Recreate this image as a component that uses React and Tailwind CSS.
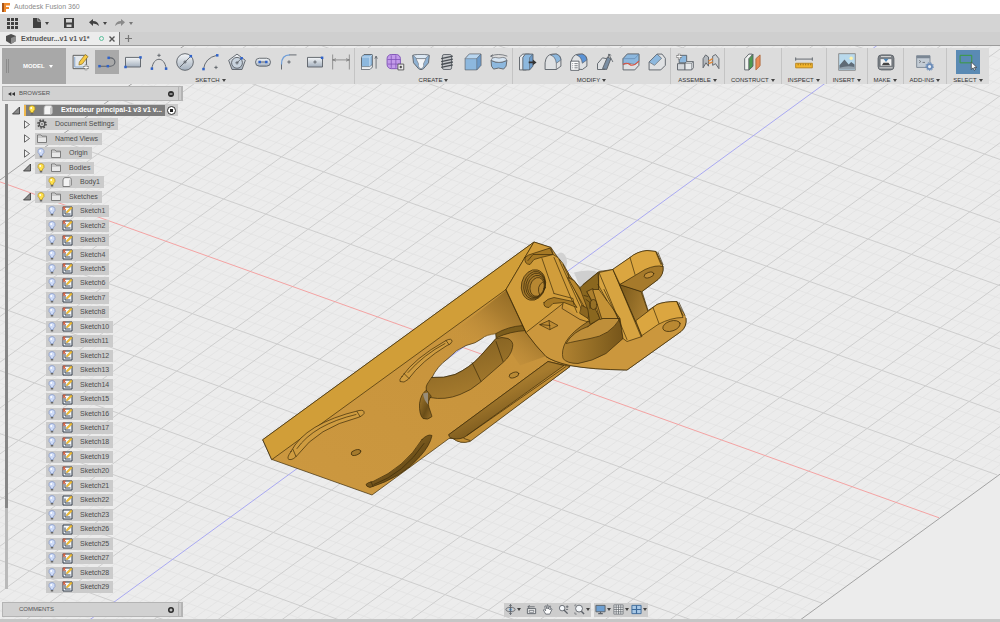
import { useState } from 'react'

const CENTER = { x: 463, y: 347 }

const TREE_SKETCHES = [1, 2, 3, 4, 5, 6, 7, 8, 10, 11, 12, 13, 14, 15, 16, 17, 18, 19, 20, 21, 22, 23, 26, 25, 27, 28, 29]
const PLAIN_SKETCHES = [22, 23, 26]

const BLUE = '#2f62c8'

/* ---------- ground grid ---------- */

function gridLines() {
  const lines = []
  for (let i = -55; i <= 55; i++) {
    const k  = i / 5
    const dx = 42.8 * k + 0.05 * k * k
    const x  = CENTER.x + dx
    const y  = CENTER.y + dx * 0.3577
    const kind = Math.abs(i) === 55 ? 'edge' : i === 0 ? 'blue' : i % 5 === 0 ? 'major' : 'minor'
    lines.push({ id: `a${i}`, kind, x1: x - 1100, y1: y + 1100 * 0.7295, x2: x + 1100, y2: y - 1100 * 0.7295 })
  }
  for (let i = -60; i <= 60; i++) {
    const j  = i / 5
    const dx = 58.1 * j
    const x  = CENTER.x + dx
    const y  = CENTER.y - dx * 0.7295
    const m  = 0.3577 - j * 0.001
    const kind = i === 0 ? 'red' : i % 5 === 0 ? 'major' : 'minor'
    lines.push({ id: `b${i}`, kind, x1: x - 465, y1: y - 465 * m, x2: x + 476, y2: y + 476 * m })
  }
  const rank = ['minor', 'major', 'edge', 'red', 'blue']
  return lines.sort((a, b) => rank.indexOf(a.kind) - rank.indexOf(b.kind))
}

const GRID = gridLines()
const GRID_COLOR = { minor: '#e1e1e1', major: '#cecece', edge: '#a3a3a3', red: '#f4a3a3', blue: '#a9a9f2' }

/* ---------- extruder part ---------- */

function Part() {
  return (
    <g stroke="#3d2c0a" strokeWidth="0.7" strokeLinejoin="round" strokeLinecap="round" fill="none">
      <path d="M574 272 Q590 268 599 272 L580 287 Z" fill="#cfcfcf" stroke="none" />
      <ellipse cx="561" cy="262" rx="6" ry="10" fill="#d2d2d2" stroke="none" />

      {/* base plate with the big opening */}
      <path
        fillRule="evenodd"
        fill="url(#plate)"
        d="M263 439 L534 241.500 L551 247 L580 290 L570 366 L470 440 Q462 444 453 438 L449 438 L372 494.500 L272 459 Z
           M432 377 Q437 366 448 358 Q456 349 466 345 Q476 343 482 338 Q486 334 496 333 L496 338 L480 356 Q470 367 455 374 Q444 378 432 377 Z"
      />
      <path d="M263 439 L534 241.500 L506 289 L272 459 Z" fill="#d19e38" />
      <path d="M506 290 L527 333 L545 356 L520 365 L498 333 L470 340 L440 342 Z" fill="url(#shade)" stroke="none" />
      <path d="M496 333 Q508 326 523 325 L526 330 Q510 331 497 337 Z" fill="#7c5d1c" />

      {/* opening wall */}
      <path
        d="M432 377 Q444 378 455 374 Q470 367 480 356 L496 338 Q502 336 508 338 Q514 341 512.500 347 Q511 355 503 362 L480 382 Q471 390 460 394 Q445 400 430 397 Q424 389 427 384 Z"
        fill="url(#wall)"
      />
      <path d="M472 362 L481 381 M496 341 L503 361" />

      {/* slot next to the opening */}
      <path d="M426 390 Q421 393 419.500 403 Q419 414 423 418 Q428 420 432 416 L429 407 Q427 401 431 396 Z" fill="url(#slot)" />
      <path d="M423 393 L428 392 L428 404 Q424 400 423 393 Z" fill="#988c78" stroke="none" />

      {/* curved slots */}
      <path d="M402 376 Q414 358 446 340 Q452 337 452 341 Q451 344 447 345 Q422 360 408 379 Q404 383 400 381 Q399 379 402 376 Z" fill="#cf9c40" />
      <path d="M404 373 L409 378 M446 340 L449 344 M408 372 Q424 354 445 343" />
      <path d="M291 451 Q305 423 359 410 Q365 409 364 413 Q362 416 358 417 Q318 427 298 454 Q293 460 289 459 Q286 458 291 451 Z" fill="#cf9c40" />
      <path d="M293 449 L296 456 M357 411 L360 416 M297 448 Q314 424 356 414" />
      <path d="M422 439 Q428 433 432 435 Q430 445 420 456 Q402 477 370 487 Q366 486 366 484 Q367 482 373 481 Q405 467 422 439 Z" fill="url(#slot)" />
      <path d="M371 481 L373 486 M374 484 Q404 473 424 443" />
      <ellipse cx="356" cy="452" rx="5" ry="2.600" transform="rotate(-18 356 452)" fill="#a57a2c" />
      <ellipse cx="514" cy="374.500" rx="5" ry="2.600" transform="rotate(-18 514 374.500)" fill="#b98a35" />

      {/* lower rib */}
      <path d="M449 434 L548 361 L570 366 L470 441 Q460 444 453 438 Z" fill="#c28f37" />
      <path d="M449 434 L548 361 L564 365 L464 437 Q456 440 450 437 Z" fill="url(#rib)" />
      <path d="M464 438 L470 440 M467 435 L566 366" />

      {/* front body and socket */}
      <path
        d="M506 289 L534 241.500 L551 247 L553 254 L558 257 L563 263 L568 272 L569 277 L573 279 L580 287 L590 309
           L583 284 L599 271 L613 269 L630 257 Q637 251 647 250 L656 251 L663 266 Q664 273 658 279 L642 291 L648 310
           L657 304 Q664 301 677 301 L686 318 Q687 326 681 331 L627 369.500 Q592 369 570 365 Q553 361 546 356 Q536 345 526 332 Z"
        fill="#d19d3b"
      />
      <path d="M570 365 Q553 361 546 356 Q536 345 526 332 L563 303 L588 323 L623 338 L640 336 L683 311 Q690 322 681 331 L627 369.500 Q592 369 570 365 Z" fill="#cb973d" stroke="none" />
      <path d="M526 332 L563 303 M506 289 L526 332 Q536 346 546 356 Q553 361 570 365 Q592 369 627 369.500 L681 331 Q687 326 686 318" />

      {/* notches of the block */}
      <path d="M525 257 Q528 254 533 253 L550 247.500 L553 254 L541 257 L534 259 L530 264 Q524 264 525 257 Z" fill="#a67925" />
      <path d="M528 260 L533 254 L552 254" />
      <path d="M542 258 L554 293 M554 257 L577 312 M559 259 L582 310 M563 264 L590 322" />
      <path d="M544 302 Q547 298 554 297 L573 301 L577 307 L564 302 L553 303 L549 307 Q543 307 544 302 Z" fill="#a67925" />
      <path d="M554 293 L573 298 L574 304 M563 303 L562 308 L580 319 L590 322 L588 327" />
      <path d="M568 277 L574 280 L594 308 L588 313 L571 283 Z" fill="#b9882f" />
      <path d="M582 305 L590 309 L588 318 L580 313 Z" fill="#8a6520" />
      <path d="M540 324 L549 320 L558 325 L550 329 Z M549 320 L550 329 M540 324 L550 325" fill="#bd8b34" />

      {/* threaded hole */}
      <g transform="rotate(14 533.500 284.500)">
        <ellipse cx="533.500" cy="284.500" rx="12" ry="15.500" fill="#a3782a" />
        <ellipse cx="534.500" cy="284.500" rx="10.500" ry="14" />
        <ellipse cx="535.500" cy="284.500" rx="9.500" ry="12.500" />
        <ellipse cx="536.500" cy="285" rx="8.500" ry="11" />
        <ellipse cx="537.500" cy="285.500" rx="7" ry="9.500" fill="#b78732" />
        <path d="M542 279 Q536 285 542 293" />
      </g>

      {/* socket crescent */}
      <path d="M588 321 Q572 331 566 341 Q561 350 563 358 Q567 363 578 363 Q592 361 606 353 L623 338 L620 318 L601 318 Q596 325 588 321 Z" fill="url(#socket)" />
      <path d="M588 326 Q600 318 601 318 L620 318 Q610 335 590 338 Q574 341 566 343 Q573 331 588 326 Z" fill="#bf8f3a" />

      {/* dark gap between block and clamp */}
      <path d="M580 287 L598 272 L599 289 L587 291 L594 306 L600 318 L590 324 L588 310 Z" fill="#8a671f" />
      <path d="M587 291 L593 288 L606 317 L600 319 L597 309 Z" fill="#ac7f2d" />
      <ellipse cx="593.500" cy="304" rx="3.500" ry="5" fill="#967026" />
      <path d="M586 299 L590 302 L590 308 M584 295 L588 296" />

      {/* clamp */}
      <path d="M593 289 L604 289 L620 318 L602 318 Z" fill="#c59337" />
      <path d="M599 272 L613 269 L642 336 L627 341 L623 338 L620 318 L599 289 Z" fill="#d7a441" />
      <path d="M599 272 L627 339 M598 284 L607 300 M604 289 L618 318 M613 269 L641 336" />
      <path d="M620 284 L641 291 L648 311 L636 321 Z" fill="url(#gap)" />
      <path d="M630 257 Q637 251 647 250 L656 251 L663 266 Q655 265 645 271 L620 284 L613 269 Z" fill="#dba640" />
      <path d="M620 284 L645 269 Q656 264 663 266 Q664 274 658 279 L642 291 Z" fill="#a67a2b" />
      <path d="M630 257 L635 274 M656 252 L661 264 M658 252 L663 264" />
      <ellipse cx="649" cy="274.500" rx="5" ry="2.600" transform="rotate(-18 649 274.500)" fill="#c18e38" />
      <path d="M636 320 L657 304 Q664 301 677 301 L683 317 Q671 317 658 324 L642 335 Z" fill="#dba640" />
      <path d="M653 307 L659 323 M677 302 L683 315 M679 302 L685 315" />
      <ellipse cx="671.500" cy="325.500" rx="9" ry="5" transform="rotate(-18 671.500 325.500)" fill="#b98832" />
    </g>
  )
}

function Viewport() {
  return (
    <svg viewBox="0 45 1000 574" preserveAspectRatio="xMidYMid slice" className="absolute inset-0 h-full w-full" aria-hidden="true">
      <defs>
        <linearGradient id="plate" x1="0" y1="1" x2="1" y2="0">
          <stop offset="0" stopColor="#cc9840" />
          <stop offset="1" stopColor="#c6923a" />
        </linearGradient>
        <linearGradient id="shade" x1="1" y1="0" x2="0.2" y2="0.7">
          <stop offset="0" stopColor="#7f5c1c" />
          <stop offset="0.5" stopColor="#aa7d30" />
          <stop offset="1" stopColor="#c99540" stopOpacity="0" />
        </linearGradient>
        <linearGradient id="wall" x1="0" y1="0" x2="0.4" y2="1">
          <stop offset="0" stopColor="#7d5c1f" />
          <stop offset="1" stopColor="#a67b2e" />
        </linearGradient>
        <linearGradient id="slot" x1="0" y1="0" x2="1" y2="1">
          <stop offset="0" stopColor="#a97e30" />
          <stop offset="0.6" stopColor="#6b4e18" />
          <stop offset="1" stopColor="#9a712a" />
        </linearGradient>
        <linearGradient id="rib" x1="0.4" y1="0.4" x2="0.6" y2="0.7">
          <stop offset="0" stopColor="#a67b2e" />
          <stop offset="1" stopColor="#7d5b1e" />
        </linearGradient>
        <linearGradient id="socket" x1="0" y1="0.5" x2="1" y2="0.5">
          <stop offset="0" stopColor="#b08231" />
          <stop offset="0.6" stopColor="#8d6823" />
          <stop offset="1" stopColor="#76551a" />
        </linearGradient>
        <linearGradient id="gap" x1="0" y1="0" x2="1" y2="0.4">
          <stop offset="0" stopColor="#7a591b" />
          <stop offset="1" stopColor="#a67c30" />
        </linearGradient>
      </defs>
      {GRID.map(l => (
        <line key={l.id} x1={l.x1} y1={l.y1} x2={l.x2} y2={l.y2} stroke={GRID_COLOR[l.kind]} strokeWidth={l.kind === 'minor' ? 0.7 : 1} />
      ))}
      <Part />
    </svg>
  )
}

/* ---------- toolbar icons ---------- */

function Icon({ children, className = 'h-6 w-6' }) {
  return (
    <svg viewBox="0 0 24 24" className={className} fill="none" stroke="#5c6168" strokeWidth="1.1" strokeLinejoin="round" aria-hidden="true">
      {children}
    </svg>
  )
}

const Dot = ({ x, y }) => <rect x={x - 1.5} y={y - 1.5} width="3" height="3" fill={BLUE} stroke="none" />
const Plus = ({ x, y }) => <path d={`M${x - 2} ${y}h4M${x} ${y - 2}v4`} />

const STEEL = 'url(#steel)'
const SKY   = '#8db8de'

const SKETCH_TOOLS = [
  { name: 'Create Sketch', art: <><rect x="2.500" y="4" width="16" height="16" fill="#e3e7eb" stroke="#555" /><path d="M4.500 6v12h12" stroke="#8aa9cc" strokeWidth="1.200" /><path d="M10 12l7-9 3.500 2.500-7 9-4 1z" fill="#f6c945" stroke="#8a6d1c" strokeWidth="0.800" /><path d="M18 15v7M14.500 18.500h7" stroke="#777" strokeWidth="3" /><path d="M18 15.500v6M15 18.500h6" stroke="#fff" strokeWidth="1.200" /></> },
  { name: 'Line', active: true, art: <><path d="M3 17h13a5.500 5 0 0 0 0-10h-2" strokeWidth="1.300" /><Dot x={3} y={17} /><Dot x={13} y={17} /><Dot x={14} y={7} /></> },
  { name: 'Rectangle', art: <><rect x="3" y="6.500" width="18" height="11.500" fill={STEEL} /><Dot x={21} y={6.5} /><Dot x={3} y={18} /></> },
  { name: 'Arc', art: <><path d="M3.500 20C5 5 19 5 20.500 20" /><Plus x={12} y={4} /><Dot x={3.5} y={20} /><Dot x={20.5} y={20} /></> },
  { name: 'Circle', art: <><circle cx="12" cy="12" r="10" fill={STEEL} /><path d="M6 18L18.500 5.500" /><path d="M10 12h4M12 10v4" /><Dot x={19} y={5} /></> },
  { name: 'Three Point Arc', art: <><path d="M3 20.500Q5 7 19 4" /><Plus x={18} y={18.5} /><Dot x={3} y={20.5} /><Dot x={19.5} y={4} /></> },
  { name: 'Polygon', art: <><path d="M12 2.500l10 7.500-4 11H6L2 10z" fill={STEEL} /><circle cx="12" cy="13" r="6.500" fill="#c8d3de" /><path d="M12 13l5-5M10 13h4M12 11v4" /><Dot x={17.5} y={7.5} /></> },
  { name: 'Slot', art: <><rect x="3" y="7.500" width="18" height="9.500" rx="4.700" fill={STEEL} /><path d="M8 12h8" /><Dot x={8} y={12} /><Dot x={16} y={12} /></> },
  { name: 'Fillet', art: <><path d="M3 21v-7M12 3.500h9" /><path d="M3 15Q3 3.500 13 3.500" stroke="#6f9ed8" strokeWidth="1.500" /><Plus x={12} y={12} /></> },
  { name: 'Center Rectangle', art: <><rect x="3" y="6.500" width="18" height="11.500" fill={STEEL} /><Plus x={12} y={12} /><Dot x={20.5} y={7} /></> },
  { name: 'Dimension', art: <path d="M2 3v18M22 3v18M2 9.500h20M6 8L2 9.500 6 11M18 8l4 1.500-4 1.500" strokeWidth="0.900" stroke="#777" /> },
]

const CREATE_TOOLS = [
  { name: 'Extrude', art: <><path d="M3 6l3-3h10v15l-3 3H3z" fill={SKY} /><path d="M3 6h10l3-3M13 6v15" stroke="#c9e0f4" /><path d="M3 17.500V21h10l3-3v-3l-3 2.500z" fill="#eef0f2" strokeWidth="0.700" /><path d="M20.500 20V5M19 8l1.500-3L22 8" strokeWidth="1" /></> },
  { name: 'Create Form', art: <><rect x="2.500" y="3" width="16" height="17" rx="5" fill="#c39bea" stroke="#7d51b5" /><path d="M7.500 4v15M13 4v15M3 9h15M3 14.500h15" stroke="#7d51b5" strokeWidth="0.900" /><rect x="15.500" y="14.500" width="7" height="7" fill="#eee" stroke="#555" /><path d="M17.500 18h3M19 16.500v3" stroke="#222" /></> },
  { name: 'Loft', art: <><path d="M2 4l6-1h8l6 1-1 9-6 7q-3 2.500-6 0l-6-7z" fill="#8fb2d3" /><path d="M2.500 4L8 3h8l5.500 1L17 8H7z" fill="#dce8f3" strokeWidth="0.600" /><path d="M6 8h12l-3 6q1 5-3 6-4-1-3-6z" fill="#f2f5f8" strokeWidth="0.600" /></> },
  { name: 'Thread', art: <><rect x="6.500" y="3" width="11" height="18" rx="2" fill="#c7c9cc" /><path d="M5 8l14-3M5 11.500l14-3M5 15l14-3M5 18.500l14-3" strokeWidth="1.700" stroke="#4a4f55" /></> },
  { name: 'Box', art: <><path d="M2.500 8l5-5.500h14V16l-5 5.500h-14z" fill={SKY} strokeWidth="0.800" /><path d="M2.500 8h14l5-5.500h-14z" fill="#b9d6ef" strokeWidth="0.600" /><path d="M16.500 8v13.500l5-5.500V2.500z" fill="#6c9bca" strokeWidth="0.600" /></> },
  { name: 'Revolve', art: <><path d="M2.500 10q9.500 5 19 0l-1 7-3 3.500q-6-2.500-12 0L3 17z" fill={SKY} /><path d="M2.500 10q1-4 5-3.500 4.500 1.500 9 0 4-.5 5 3.500-9.500 5-19 0z" fill="#d5e4f2" strokeWidth="0.800" /><path d="M2 5q9-4 20 0M2 5l2.500-2M2 5l3 1.500" strokeWidth="0.900" /></> },
]

const MODIFY_TOOLS = [
  { name: 'Press Pull', art: <><path d="M3 6l4-3.500h8V18l-4 3.500H3z" fill="#e7e9eb" /><path d="M7 6.500l3-4h9V17l-4 4.500H7z" fill={SKY} /><path d="M15 7v14.500l4-4.500V2.500z" fill="#6c9bca" strokeWidth="0.700" /><path d="M14 11.500h5V9l4.500 3.500-4.500 3.500v-2.500h-5z" fill="#333" stroke="none" /></> },
  { name: 'Fillet Edge', art: <><path d="M2.500 21v-8q1-10 9-10.500h5q5 2 5 7V17l-5.500 4z" fill="#dfe1e3" /><path d="M9 3.500q6 2 7 10l5.500-4q-1-6-6-7z" fill={SKY} strokeWidth="0.800" /><path d="M16 21v-7.500" strokeWidth="0.800" /></> },
  { name: 'Change Parameters', art: <><path d="M2.500 20v-7q1-10 9-10.500h5q5 2 5 7V17l-5.500 4z" fill="#dfe1e3" /><path d="M9 3.500q6 2 7 10l5.500-4q-1-6-6-7z" fill="#5b93d6" strokeWidth="0.800" /><rect x="2" y="11" width="10" height="11" fill="#fff" /><path d="M4 14h1M6.500 14h4M4 16.500h1M6.500 16.500h4M4 19h1M6.500 19h4" strokeWidth="1" /></> },
  { name: 'Draft', art: <><path d="M3 21v-7l6-7 5 1-2 13z" fill="#dfe1e3" /><path d="M9 20l6-14 4 2-5 13z" fill="#7a8ea3" /><path d="M21.500 12L16.500 2.500M16 6l.5-3.500 3 1.500" strokeWidth="1" /></> },
  { name: 'Split Body', art: <><path d="M2.500 8l5-5.500h14V16l-5 5.500h-14z" fill="#dfe1e3" /><path d="M2.500 8l5-5.500h14V11l-5 4q-7-3-14 0z" fill={SKY} strokeWidth="0.800" /><path d="M2.500 8h14l5-5.500" stroke="#5c80a5" strokeWidth="0.700" /><path d="M2.500 15q4-3 8 0t11-4" stroke="#dc5140" strokeWidth="1.400" /></> },
  { name: 'Chamfer', art: <><path d="M2.500 12L12 2.500h6l4 5V16l-5.500 5.500h-14z" fill="#dfe1e3" /><path d="M2.500 12L12 2.500l5.500 5L9 16z" fill={SKY} strokeWidth="0.800" /></> },
]

const ASSEMBLE_TOOLS = [
  { name: 'New Component', art: <><path d="M5 6l2-2h7v9H5z" fill={SKY} /><path d="M3 14h9v7.500H3z" fill="#d4d8dc" /><path d="M12 13.500l2-2h8V19l-2 2.500h-8z" fill="#e7eaec" /><path d="M20 13.500v8M12 13.500h8l2-2" strokeWidth="0.700" /><path d="M5 2v7M1.500 5.500h7" stroke="#777" strokeWidth="3" /><path d="M5 2.500v6M2 5.500h6" stroke="#fff" strokeWidth="1.200" /></> },
  { name: 'Joint', art: <><path d="M2.500 19V8l3-4.500L9 6v11l-3-4z" fill="#b4b9be" /><path d="M14 16V5l3.500-2 4 5v12l-4-6z" fill="#cdd1d4" /><path d="M9 11l5-3M9 14l5-2" stroke="#e08a3c" strokeWidth="1.800" /></> },
]

const CONSTRUCT_TOOLS = [{ name: 'Offset Plane', art: <><path d="M2 8l5-5.500h4V18l-4 3.500H2z" fill="#f0f2f0" /><path d="M7 8l5-5.500V17l-5 4.500z" fill="#4c9a51" /><path d="M15.500 8l5-4.500v13l-5 5z" fill="#e88b54" stroke="#b06a40" /></> }]
const INSPECT_TOOLS   = [{ name: 'Measure', art: <><path d="M2 8.500h20M2 6.500v4M22 6.500v4" /><rect x="2" y="13.500" width="20" height="5.500" fill="#f3b52c" stroke="#b8861f" /><path d="M5 14v2M8 14v2M11 14v2M14 14v2M17 14v2M20 14v2" stroke="#7b570d" strokeWidth="0.800" /></> }]
const INSERT_TOOLS    = [{ name: 'Insert Image', art: <><rect x="2" y="2" width="20" height="20" fill="#b9d9ec" stroke="#8a8a8a" /><circle cx="17" cy="7.500" r="2" fill="#fff3a8" stroke="none" /><path d="M3 19v-3l6-7 5 6 3-3 4 3v5H3z" fill="#5f6b76" stroke="none" /><path d="M3 21v-2q9-3 18-1v3z" fill="#94a2ad" stroke="none" /></> }]
const MAKE_TOOLS      = [{ name: '3D Print', art: <><rect x="2.500" y="3.500" width="19" height="18" rx="4" fill="#7c8186" /><rect x="5" y="8" width="14" height="9" fill="#f2f2f2" strokeWidth="0.800" /><path d="M9 8h6l-3 4z" fill="#4b83b5" stroke="none" /><path d="M7 16l2-3h6l2 3z" fill="#444" stroke="none" /><path d="M4 19h16M6 5.500h12" stroke="#ddd" /></> }]
const ADDIN_TOOLS     = [{ name: 'Scripts and Add-Ins', art: <><rect x="2" y="4.500" width="16" height="14" fill="#c3ccd5" stroke="#7b8794" /><path d="M2 6h16" strokeWidth="3" stroke="#7b8794" /><path d="M5 10l2 1.500L5 13M9 12.500h3" strokeWidth="0.900" /><circle cx="17.500" cy="17.500" r="3" stroke="#6b8cb8" strokeWidth="2.200" fill="#e7ecf3" /><circle cx="17.500" cy="17.500" r="4.700" stroke="#6b8cb8" strokeWidth="1.200" strokeDasharray="1.600 1.600" /></> }]
const SELECT_TOOLS    = [{ name: 'Select', blue: true, art: <><rect x="2.500" y="4" width="14" height="9" stroke="#3c9a3f" strokeWidth="1.200" /><path d="M16 12v9l2-2 1.500 3 1.500-1-1.500-2.500h3z" fill="#fff" stroke="#333" strokeWidth="0.800" /></> }]

const GROUPS = [
  { label: 'SKETCH',    tools: SKETCH_TOOLS },
  { label: 'CREATE',    tools: CREATE_TOOLS },
  { label: 'MODIFY',    tools: MODIFY_TOOLS },
  { label: 'ASSEMBLE',  tools: ASSEMBLE_TOOLS },
  { label: 'CONSTRUCT', tools: CONSTRUCT_TOOLS },
  { label: 'INSPECT',   tools: INSPECT_TOOLS },
  { label: 'INSERT',    tools: INSERT_TOOLS },
  { label: 'MAKE',      tools: MAKE_TOOLS },
  { label: 'ADD-INS',   tools: ADDIN_TOOLS },
  { label: 'SELECT',    tools: SELECT_TOOLS },
]

function Caret({ className = 'text-[#444]' }) {
  return (
    <svg viewBox="0 0 4 3" className={`h-[3px] w-1 shrink-0 ${className}`} aria-hidden="true">
      <path d="M0 0h4L2 3z" fill="currentColor" />
    </svg>
  )
}

function ToolGroup({ group, first }) {
  return (
    <div className={`flex flex-col items-center justify-between pt-0.5 ${first ? 'pl-px' : 'border-l border-[#c4c4c4]'}`}>
      <div className="flex pl-px">
        {group.tools.map(tool => (
          <button
            key={tool.name}
            aria-label={tool.name}
            className={`mx-px flex h-6 w-6 items-center justify-center ${tool.active ? 'bg-[#a9a9a9]' : ''} ${tool.blue ? 'bg-[#5a8ab4]' : ''}`}
          >
            <Icon className="h-5 w-5">{tool.art}</Icon>
          </button>
        ))}
      </div>
      <button className="flex items-center gap-0.5 px-1.5 text-[6px] leading-[8px] text-[#333]">
        {group.label}
        <Caret />
      </button>
    </div>
  )
}

/* ---------- browser tree ---------- */

function Bulb({ on }) {
  return (
    <svg viewBox="0 0 8 10" className="h-[10px] w-2 shrink-0" aria-hidden="true">
      <path d="M4 .5a3 3 0 0 0-1.700 5.500l.4 1.500h2.600l.4-1.500A3 3 0 0 0 4 .5z" fill={on ? '#ffe14d' : '#cfdcf8'} stroke={on ? '#b08f1c' : '#7f93c4'} strokeWidth="0.700" />
      <path d="M2.800 8h2.400v1.500H2.800z" fill="#666" />
      <circle cx="3.200" cy="3" r="0.900" fill="#fff" />
    </svg>
  )
}

function Folder() {
  return (
    <svg viewBox="0 0 10 9" className="h-[9px] w-[10px] shrink-0" aria-hidden="true">
      <path d="M.5 8.500V1h3.500l1 1.200h4.500v6.300z" fill="#e8e8e8" stroke="#666" strokeWidth="0.800" />
      <path d="M.5 3h9" stroke="#888" strokeWidth="0.600" />
    </svg>
  )
}

function Gear() {
  return (
    <svg viewBox="0 0 10 10" className="h-[10px] w-[10px] shrink-0" fill="none" stroke="#4d4d4d" aria-hidden="true">
      <circle cx="5" cy="5" r="4" strokeWidth="1.600" strokeDasharray="1.600 1.540" />
      <circle cx="5" cy="5" r="2.800" strokeWidth="1.200" />
      <circle cx="5" cy="5" r="0.800" fill="#4d4d4d" stroke="none" />
    </svg>
  )
}

function BodyIcon({ className }) {
  return (
    <svg viewBox="0 0 10 10" className={`h-[10px] w-[10px] shrink-0 ${className}`} aria-hidden="true">
      <path d="M1 3q0-2 2-2.400h4.500Q9.300.8 9.300 2.500V8L8 9.500H1z" fill="#f4f4f4" stroke="currentColor" strokeWidth="0.800" />
      <path d="M7 3v6.400L9 8V1.500z" fill="#c9c9c9" />
    </svg>
  )
}

function SketchIcon({ plain }) {
  return (
    <svg viewBox="0 0 11 11" className="h-[11px] w-[11px] shrink-0" aria-hidden="true">
      <path d="M1 1h9v9H1z" fill="#f4f8fc" stroke="#333d4a" strokeWidth="1" />
      <path d="M3 3.500V8h5.500" stroke="#3a4657" fill="none" />
      <path d="M4.200 7l.6-1.800L9 .8l1.400 1.300L6 6.500z" fill="#f5bf2e" stroke="#a87c18" strokeWidth="0.300" />
      {!plain && <path d="M.6.800l3.300 3M3.900.8l-3.300 3M2.200.2v4" stroke="#e2562f" strokeWidth="0.800" />}
    </svg>
  )
}

function Twisty({ open }) {
  return (
    <svg viewBox="0 0 8 9" className="h-[9px] w-2 shrink-0" aria-hidden="true">
      {open
        ? <path d="M7.500 1v7H.5z" fill="#8a8a8a" stroke="#333" strokeWidth="0.800" />
        : <path d="M1.500.800l5 3.700-5 3.700z" fill="#f0f0f0" stroke="#444" strokeWidth="0.800" />}
    </svg>
  )
}

function Row({ open, nested, icon, bulb, children }) {
  return (
    <li className={`flex h-3 items-center ${nested ? 'pl-[34px]' : 'pl-[11px]'}`}>
      {open !== undefined && <button aria-label="Toggle" className="mr-1 flex"><Twisty open={open} /></button>}
      <button className="flex h-3 items-center bg-[#cbcbcb] pr-1 pl-0.5 text-[#4c4c4c]">
        {bulb !== undefined && <span className="mr-1.5 flex"><Bulb on={bulb} /></span>}
        <span className="flex w-[18px]">{icon}</span>
        {children}
      </button>
    </li>
  )
}

function Tree() {
  return (
    <ul className="flex flex-1 flex-col justify-between text-[7px] leading-3 whitespace-nowrap">
      <li className="flex h-3 items-center">
        <button aria-label="Toggle" className="mr-1 flex"><Twisty open /></button>
        <span className="flex h-3 items-center bg-[#cbcbcb]">
          <button className="flex h-[11px] w-[141px] items-center border-l-2 border-[#f0b84c] bg-[#7d7d7d] font-bold text-white">
            <span className="ml-0.5 flex"><Bulb on /></span>
            <span className="mr-2 ml-[7px] flex"><BodyIcon className="text-[#aaaaaa]" /></span>
            Extrudeur principal-1 v3 v1 v...
          </button>
          <label className="flex px-0.5">
            <input type="radio" name="active" defaultChecked aria-label="Activate component" className="h-[9px] w-[9px] appearance-none rounded-full border border-[#333] bg-white bg-[radial-gradient(circle,#222_30%,transparent_35%)]" />
          </label>
        </span>
      </li>
      <Row open={false} icon={<Gear />}>Document Settings</Row>
      <Row open={false} icon={<Folder />}>Named Views</Row>
      <Row open={false} bulb={false} icon={<Folder />}>Origin</Row>
      <Row open bulb icon={<Folder />}>Bodies</Row>
      <Row nested bulb icon={<BodyIcon className="text-[#666666]" />}>Body1</Row>
      <Row open bulb icon={<Folder />}>Sketches</Row>
      {TREE_SKETCHES.map(n => (
        <Row key={n} nested bulb={false} icon={<SketchIcon plain={PLAIN_SKETCHES.includes(n)} />}>
          Sketch{n}
        </Row>
      ))}
    </ul>
  )
}

function PanelHeader({ title, arrows, plus, open, onToggle }) {
  return (
    <div className="flex h-[15px] w-[181px] shrink-0 items-center border border-[#b4b4b4] bg-[#d1d1d1] text-[6px] text-[#555]">
      <span className="flex w-4 justify-center">
        {arrows && (
          <svg viewBox="0 0 7 4" className="h-1 w-[7px]" aria-hidden="true"><path d="M3.300 0v4L0 2zM7 0v4L3.700 2z" fill="#333" /></svg>
        )}
      </span>
      <h2 className="flex-1">{title}</h2>
      <button aria-label={title} aria-expanded={open} onClick={onToggle} className="mr-1 flex">
        <svg viewBox="0 0 6 6" className="h-1.5 w-1.5" aria-hidden="true">
          <circle cx="3" cy="3" r="3" fill="#2b2b2b" />
          <path d={plus ? 'M1.500 3h3M3 1.500v3' : 'M1.500 3h3'} stroke="#fff" strokeWidth="0.900" />
        </svg>
      </button>
      <span className="h-full w-1 border-x border-[#b4b4b4] bg-[#cccccc]" />
    </div>
  )
}

/* ---------- view navigation ---------- */

const NAV_LEFT = [
  { name: 'Orbit', caret: true, art: <><circle cx="12" cy="12" r="3" fill="#5d9bd0" stroke="none" /><ellipse cx="12" cy="12" rx="10" ry="4.500" strokeWidth="1.800" /><path d="M12 1v22M9 5l3-4 3 4M9 19l3 4 3-4" strokeWidth="1.800" /></> },
  { name: 'Look At', art: <><path d="M3 10h18v11H3z" fill="#eee" strokeWidth="2" /><path d="M7 14h10v4H7z" fill="#fff" strokeWidth="1.600" /><path d="M4 6h15M8 3L4 6l4 3" strokeWidth="1.800" /></> },
  { name: 'Pan', art: <path d="M8 22L3 13l2-1 3 3L6 5l2-1 3 7V2h2l1 9 3-7 2 1-2 8 3-3 2 1-5 11z" fill="#fff" strokeWidth="1.700" /> },
  { name: 'Zoom', art: <><circle cx="9" cy="9" r="6" fill="#f4f7fa" strokeWidth="1.900" /><path d="M13 13l8 8" strokeWidth="3" /><path d="M17 6h6M20 3v6M17 12h5" strokeWidth="1.700" /></> },
  { name: 'Fit', caret: true, art: <><circle cx="11" cy="10" r="7.500" fill="#f4f7fa" strokeWidth="1.900" /><path d="M16 16l6 6" strokeWidth="3" /><path d="M2 18v4h4M2 5V2h3" strokeWidth="1.400" /></> },
]
const NAV_RIGHT = [
  { name: 'Display Settings', caret: true, art: <><rect x="2" y="3" width="20" height="14" fill="#6e9fd0" strokeWidth="2" /><path d="M7 21h10M12 17v4" strokeWidth="2.500" /></> },
  { name: 'Grid and Snaps', caret: true, art: <><rect x="2" y="2" width="20" height="20" fill="#f6f6f6" strokeWidth="1.500" /><path d="M7 2v20M12 2v20M17 2v20M2 7h20M2 12h20M2 17h20" strokeWidth="1.500" /></> },
  { name: 'Viewports', caret: true, art: <><rect x="2" y="3" width="20" height="18" fill="#a8c8e6" stroke="#3c6a9a" strokeWidth="2" /><path d="M12 3v18M2 12h20" stroke="#3c6a9a" strokeWidth="2.500" /></> },
]

function NavGroup({ items, className }) {
  return (
    <div className={`flex h-[14px] items-center bg-[#cdcdcd] px-px ${className}`}>
      {items.map(item => (
        <button key={item.name} aria-label={item.name} className="flex items-center gap-px">
          <Icon className="h-[11px] w-[11px]">{item.art}</Icon>
          {item.caret && <Caret />}
        </button>
      ))}
    </div>
  )
}

/* ---------- application bars ---------- */

function QuickBar() {
  return (
    <div className="flex h-[18px] shrink-0 items-center bg-[#d4d4d4] pl-[7px] text-[#404040]">
      <button aria-label="Data panel" className="mr-[15px] flex">
        <svg viewBox="0 0 11 11" className="h-[11px] w-[11px]" aria-hidden="true">
          <path d="M0 0h3v3H0zM4 0h3v3H4zM8 0h3v3H8zM0 4h3v3H0zM4 4h3v3H4zM8 4h3v3H8zM0 8h3v3H0zM4 8h3v3H4zM8 8h3v3H8z" fill="currentColor" />
        </svg>
      </button>
      <button aria-label="File" className="mr-[15px] flex items-center gap-1">
        <svg viewBox="0 0 8 10" className="h-[10px] w-2" aria-hidden="true"><path d="M0 0h4.500v3.500H8V10H0zM5.200 0L8 2.800H5.200z" fill="currentColor" /></svg>
        <Caret />
      </button>
      <button aria-label="Save" className="mr-[15px] flex">
        <svg viewBox="0 0 10 10" className="h-[10px] w-[10px]" aria-hidden="true"><path fillRule="evenodd" d="M0 0h10v10H0zM2 1v3.500h6V1zM2.500 6.500V9h5V6.500z" fill="currentColor" /></svg>
      </button>
      <button aria-label="Undo" className="mr-2 flex items-center gap-1">
        <svg viewBox="0 0 10 8" className="h-2 w-[10px]" aria-hidden="true"><path d="M4 0v2q5 0 6 5-2-2.500-6-2.500V7L0 3.300z" fill="currentColor" /></svg>
        <Caret />
      </button>
      <button aria-label="Redo" className="flex items-center gap-1 text-[#8a8a8a]">
        <svg viewBox="0 0 10 8" className="h-2 w-[10px]" aria-hidden="true"><path d="M6 0v2Q1 2 0 7q2-2.500 6-2.500V7l4-3.700z" fill="currentColor" /></svg>
        <Caret className="text-[#777]" />
      </button>
    </div>
  )
}

function TabStrip() {
  return (
    <div className="flex h-[14px] shrink-0 items-stretch border-b border-[#9c9c9c] bg-[#cfcfcf]">
      <div className="flex w-[120px] items-center border-r border-[#777] bg-[#ececec] pl-1.5">
        <svg viewBox="0 0 10 10" className="mr-[5px] h-[10px] w-[10px]" aria-hidden="true">
          <path d="M0 2l5-2 5 2v5L5 10 0 7z" fill="#4f4f4f" />
          <path d="M5 4l5-2v5L5 10z" fill="#8d8d8d" />
        </svg>
        <button className="text-[7px] leading-3 font-bold text-[#555]">Extrudeur...v1 v1 v1*</button>
        <span className="ml-auto h-[5px] w-[5px] rounded-full border border-[#5cc09c]" />
        <button aria-label="Close tab" className="mr-1 ml-[5px] flex">
          <svg viewBox="0 0 6 6" className="h-1.5 w-1.5" aria-hidden="true"><path d="M.5.500l5 5M5.500.500l-5 5" stroke="#555" strokeWidth="1.400" /></svg>
        </button>
      </div>
      <button aria-label="New tab" className="flex w-4 items-center justify-center">
        <svg viewBox="0 0 7 7" className="h-[7px] w-[7px]" aria-hidden="true"><path d="M0 3.500h7M3.500 0v7" stroke="#777" strokeWidth="1.200" /></svg>
      </button>
    </div>
  )
}

export default function App() {
  const [browserOpen, setBrowserOpen] = useState(true)

  return (
    <div className="flex h-screen flex-col overflow-hidden bg-[#ececec] font-['Liberation_Sans',Arial,sans-serif]">
      <svg className="absolute h-0 w-0" aria-hidden="true">
        <linearGradient id="steel" x1="0" y1="0" x2="0" y2="1">
          <stop offset="0" stopColor="#f4f6f8" />
          <stop offset="1" stopColor="#a3afbd" />
        </linearGradient>
      </svg>

      <header className="flex h-[14px] shrink-0 items-center bg-white pl-0.5">
        <svg viewBox="0 0 8 9" className="mr-1 h-[9px] w-2" aria-hidden="true">
          <path d="M0 0h8v2.500H4v1.500h3v2H4v3H0z" fill="#f08a2c" />
          <path d="M0 0h2v9H0z" fill="#a8551a" />
        </svg>
        <h1 className="text-[7px] leading-3 text-[#8a8a8a]">Autodesk Fusion 360</h1>
      </header>
      <QuickBar />
      <TabStrip />

      <main className="relative flex min-h-0 flex-1 flex-col overflow-hidden">
        <Viewport />

        <nav className="relative mt-0.5 ml-0.5 flex h-9 shrink-0 self-start bg-[#dcdcdc]">
          <button className="flex w-16 items-center bg-[#a8a8a8] pl-1 text-[6px] font-bold text-white">
            <span className="mr-[14px] h-[14px] w-[3px] border-x border-[#8c8c8c]" />
            MODEL
            <span className="ml-1 flex"><Caret className="text-white" /></span>
          </button>
          {GROUPS.map((group, i) => <ToolGroup key={group.label} group={group} first={i === 0} />)}
        </nav>

        <aside className="relative mt-0.5 ml-0.5 flex min-h-0 flex-1 flex-col self-start">
          <PanelHeader title="BROWSER" arrows open={browserOpen} onToggle={() => setBrowserOpen(!browserOpen)} />
          {browserOpen && (
            <div className="mt-[3px] mb-[9px] flex min-h-0 flex-1 pl-[3px]">
              <div className="mr-1 mb-1 flex w-[3px] flex-col bg-[#b9b9b9]">
                <div className="h-5/6 bg-[#858585]" />
              </div>
              <Tree />
            </div>
          )}
        </aside>

        <footer className="relative mt-auto mb-0.5 grid shrink-0 grid-cols-[1fr_auto_1fr] items-center pl-0.5">
          <PanelHeader title="COMMENTS" plus />
          <div className="ml-[150px] flex gap-[3px]">
            <NavGroup items={NAV_LEFT} className="gap-[5px]" />
            <NavGroup items={NAV_RIGHT} className="gap-0.5" />
          </div>
        </footer>
      </main>

      <div className="h-[3px] shrink-0 bg-[#c6c6c6]" />
    </div>
  )
}
